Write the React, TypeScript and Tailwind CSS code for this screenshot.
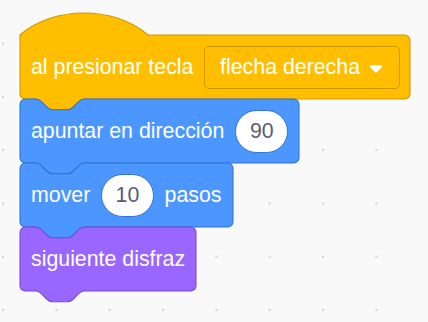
import React from "react";

const S = 4 / 3;
const NOTCH_R = "c 2,0 3,1 4,2 l 4,4 c 1,1 2,2 4,2 h 12 c 2,0 3,-1 4,-2 l 4,-4 c 1,-1 2,-2 4,-2";
const NOTCH_L = "c -2,0 -3,1 -4,2 l -4,4 c -1,1 -2,2 -4,2 h -12 c -2,0 -3,-1 -4,-2 l -4,-4 c -1,-1 -2,-2 -4,-2";

function blockPath(w: number, hat: boolean) {
  const top = hat
    ? `M 0,0 c 25,-22 71,-22 96,0 H ${w - 4} a 4,4 0 0,1 4,4`
    : `M 0,4 a 4,4 0 0,1 4,-4 H 12 ${NOTCH_R} H ${w - 4} a 4,4 0 0,1 4,4`;
  return `${top} V 44 a 4,4 0 0,1 -4,4 H 48 ${NOTCH_L} H 4 a 4,4 0 0,1 -4,-4 Z`;
}

function Block({
  width,
  fill,
  stroke,
  hat = false,
  children,
}: {
  width: number;
  fill: string;
  stroke: string;
  hat?: boolean;
  children: React.ReactNode;
}) {
  const wu = width / S;
  return (
    <div className="relative h-[64px]" style={{ width }}>
      <svg
        className="absolute left-0 top-0 overflow-visible"
        width={width}
        height={64}
        viewBox={`0 0 ${wu} 48`}
      >
        <path d={blockPath(wu, hat)} fill={fill} stroke={stroke} strokeWidth={0.8} />
      </svg>
      <div className="relative flex h-full items-center gap-[10.67px] pl-[11px] pr-[10.67px] pt-[1px] text-white">
        {children}
      </div>
    </div>
  );
}

function NumberInput({ value }: { value: string }) {
  return (
    <div className="flex h-[43px] w-[53px] shrink-0 items-center justify-center rounded-full border border-[#3373cc] bg-white text-[#575e75]">
      {value}
    </div>
  );
}

export default function App() {
  return (
    <div className="h-[322px] w-[428px] overflow-hidden bg-[#f9f9f9] bg-[radial-gradient(circle,#d6d6d6_1.1px,transparent_1.6px)] bg-[length:53.333px_53.333px] bg-[position:29.67px_16.67px] font-['Liberation_Sans',Arial,sans-serif] text-[21.33px]">
      <div className="flex flex-col pl-[20px] pt-[35px]">
        <Block width={390} fill="#ffbf00" stroke="#cc9900" hat>
          <span className="whitespace-nowrap">al presionar tecla</span>
          <div className="ml-auto flex h-[43px] w-[196px] shrink-0 items-center rounded-[5px] border border-[#cc9900] bg-[#ffbf00] pl-[15px] pr-[16px]">
            <span className="whitespace-nowrap">flecha derecha</span>
            <svg className="ml-auto mt-[3px]" width="14" height="8" viewBox="0 0 14 8">
              <path d="M 2,1.5 L 12,1.5 L 7,6.5 Z" fill="white" stroke="white" strokeWidth="2.4" strokeLinejoin="round" />
            </svg>
          </div>
        </Block>
        <Block width={279} fill="#4c97ff" stroke="#3373cc">
          <span className="whitespace-nowrap">apuntar en dirección</span>
          <div className="ml-auto">
            <NumberInput value="90" />
          </div>
        </Block>
        <Block width={213} fill="#4c97ff" stroke="#3373cc">
          <span className="whitespace-nowrap">mover</span>
          <NumberInput value="10" />
          <span className="whitespace-nowrap">pasos</span>
        </Block>
        <Block width={176} fill="#9966ff" stroke="#774dcb">
          <span className="whitespace-nowrap">siguiente disfraz</span>
        </Block>
      </div>
    </div>
  );
}
